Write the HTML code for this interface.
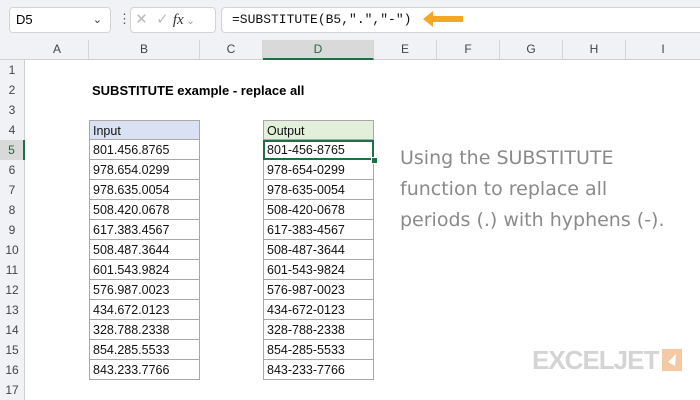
<!DOCTYPE html>
<html><head><style>
body{margin:0;width:700px;height:400px;overflow:hidden;background:#fff;font-family:"Liberation Sans",sans-serif;position:relative}
.a{position:absolute}
.top{left:0;top:0;width:700px;height:40px;background:#f0f2f5}
.hdr{top:40px;height:19px;background:#f0f2f5;border-bottom:1px solid #d0d0d0}
.ch{position:absolute;top:40px;height:19px;line-height:19px;text-align:center;font-size:12px;color:#444;border-right:1px solid #d6d6d6}
.rh{position:absolute;left:0;width:25px;height:20px;line-height:20px;text-align:center;font-size:12px;color:#444;background:#f0f2f5;border-right:1px solid #d0d0d0;box-sizing:border-box}
.cell{position:absolute;height:20px;line-height:20px;font-size:12.5px;color:#111;padding-left:3px;box-sizing:border-box;border:1px solid #a8a8a8;border-top:none}
</style></head><body>
<div class="a top"></div>
<div class="a" style="left:9px;top:7px;width:100px;height:24px;background:#fff;border:1px solid #d4d4d4;border-radius:4px;font-size:13px;line-height:24px;text-indent:6px">D5<span style="position:absolute;right:8px;font-size:11px;color:#333">&#8964;</span></div>
<div class="a" style="left:118px;top:11px;color:#555;font-size:13px">&#8942;</div>
<div class="a" style="left:130px;top:7px;width:84px;height:24px;background:#fff;border:1px solid #d4d4d4;border-radius:4px;color:#bbb;font-size:15px;line-height:24px">&nbsp;&#10005;&nbsp;&nbsp;&#10003;&nbsp;<i style="font-family:'Liberation Serif',serif;color:#333">fx</i><span style="font-size:10px;color:#999"> &#8964;</span></div>
<div class="a" style="left:221px;top:7px;width:490px;height:24px;background:#fff;border:1px solid #d4d4d4;border-radius:4px;font-family:'Liberation Mono',monospace;font-size:13px;line-height:24px;text-indent:10px;color:#111">=SUBSTITUTE(B5,".","-")</div>
<svg class="a" style="left:423px;top:10px" width="42" height="18" viewBox="0 0 42 18"><path d="M0 9L10 1V6H40V12H10V17Z" fill="#f5a623"/></svg>
<div class="a hdr" style="left:0;width:700px"></div>
<div class="ch" style="left:26px;width:62px">A</div>
<div class="ch" style="left:89px;width:110px">B</div>
<div class="ch" style="left:200px;width:62px">C</div>
<div class="ch" style="left:263px;width:110px;background:#d9d9d9;color:#1e6b3c;border-bottom:2px solid #1e7145;height:18px">D</div>
<div class="ch" style="left:374px;width:62px">E</div>
<div class="ch" style="left:437px;width:62px">F</div>
<div class="ch" style="left:500px;width:62px">G</div>
<div class="ch" style="left:563px;width:62px">H</div>
<div class="ch" style="left:626px;width:74px">I</div>
<div id="rows"></div>
<div class="a" style="left:92px;top:83px;font-size:13px;font-weight:bold">SUBSTITUTE example - replace all</div>
<div class="cell" style="left:89px;top:120px;width:111px;background:#d9e1f2;border-top:1px solid #a8a8a8">Input</div>
<div class="cell" style="left:263px;top:120px;width:111px;background:#e2efda;border-top:1px solid #a8a8a8">Output</div>
<div id="data"></div>
<div class="a" style="left:263px;top:140px;width:111px;height:20px;border:2px solid #1e7145;box-sizing:border-box"></div>
<div class="a" style="left:371px;top:157px;width:5px;height:5px;background:#1e7145;border:1px solid #fff"></div>
<div class="a" style="left:400px;top:143px;font-family:'Comic Sans MS','DejaVu Sans',cursive;font-size:19px;line-height:31px;color:#8a8a8a">Using the SUBSTITUTE<br>function to replace all<br>periods (.) with hyphens (-).</div>
<div class="a" style="left:532px;top:345px;font-size:26px;font-weight:bold;color:#d4d4d4;letter-spacing:-1px">EXCELJET</div>
<div class="a" style="left:662px;top:349px;width:20px;height:22px;background:#f6c9a5"><svg width="20" height="22"><path d="M14 5L6 13L13 17Z" fill="#fff"/></svg></div>
<script>
var r='',i;
for(i=1;i<=17;i++){var t=60+(i-1)*20;r+='<div class="rh" style="top:'+t+'px;'+(i==5?'background:#d9d9d9;color:#1e6b3c;border-right:2px solid #1e7145':'')+'">'+i+'</div>';}
document.getElementById('rows').innerHTML=r;
var d=['801.456.8765','978.654.0299','978.635.0054','508.420.0678','617.383.4567','508.487.3644','601.543.9824','576.987.0023','434.672.0123','328.788.2338','854.285.5533','843.233.7766'];
var s='';
d.forEach(function(v,k){var t=140+k*20;s+='<div class="cell" style="left:89px;top:'+t+'px;width:111px;background:#fff">'+v+'</div><div class="cell" style="left:263px;top:'+t+'px;width:111px;background:#fff">'+v.replace(/\./g,'-')+'</div>';});
document.getElementById('data').innerHTML=s;
</script>
</body></html>
